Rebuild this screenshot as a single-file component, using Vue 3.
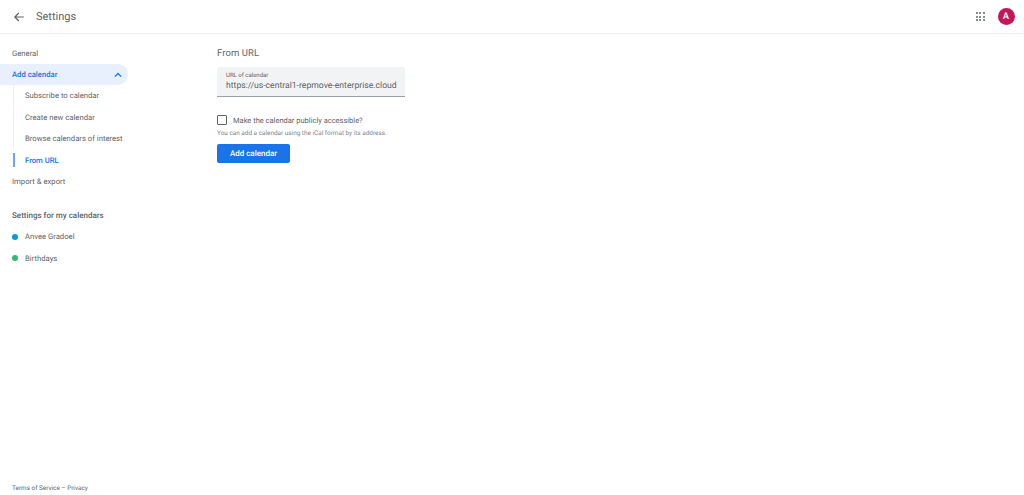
<script setup>
const subItems = [
  { label: 'Subscribe to calendar' },
  { label: 'Create new calendar' },
  { label: 'Browse calendars of interest' },
  { label: 'From URL', active: true },
]
const calendars = [
  { label: 'Anvee Gradoel', color: '#039be5' },
  { label: 'Birthdays', color: '#33b679' },
]
const dots = [0, 1, 2, 3, 4, 5, 6, 7, 8]
</script>

<template>
  <div class="page">
    <header class="topbar">
      <svg class="back" width="12" height="12" viewBox="0 0 12 12">
        <path d="M10.8 6H2M5.8 2L1.8 6l4 4" fill="none" stroke="#5f6368" stroke-width="1.2" />
      </svg>
      <span class="title">Settings</span>
      <div class="spacer"></div>
      <div class="apps">
        <i v-for="d in dots" :key="d"></i>
      </div>
      <div class="avatar">A</div>
    </header>
    <div class="body">
      <nav class="side">
        <div class="item">General</div>
        <div class="item open">
          <span>Add calendar</span>
          <svg width="8" height="6" viewBox="0 0 8 6">
            <path d="M0.8 4.6L4 1.5l3.2 3.1" fill="none" stroke="#1a73e8" stroke-width="1.3" />
          </svg>
        </div>
        <div class="subs">
          <div v-for="s in subItems" :key="s.label" class="sub" :class="{ active: s.active }">{{ s.label }}</div>
        </div>
        <div class="item">Import &amp; export</div>
        <div class="heading">Settings for my calendars</div>
        <div v-for="c in calendars" :key="c.label" class="cal">
          <i :style="{ background: c.color }"></i>
          <span>{{ c.label }}</span>
        </div>
        <div class="terms">Terms of Service – Privacy</div>
      </nav>
      <main class="main">
        <h2>From URL</h2>
        <div class="field">
          <label>URL of calendar</label>
          <div class="value">https://us-central1-repmove-enterprise.cloud</div>
        </div>
        <div class="check">
          <span class="box"></span>
          <span>Make the calendar publicly accessible?</span>
        </div>
        <p class="hint">You can add a calendar using the iCal format by its address.</p>
        <button class="add">Add calendar</button>
      </main>
    </div>
  </div>
</template>

<style>
html, body { margin: 0; background: #fff; }
</style>

<style scoped>
.page {
  width: 1024px;
  height: 495px;
  overflow: hidden;
  display: flex;
  flex-direction: column;
  font-family: Roboto, "Liberation Sans", sans-serif;
  color: #5f6368;
  text-rendering: geometricPrecision;
}
.topbar {
  height: 33px;
  flex: none;
  display: flex;
  align-items: center;
  padding: 0 9.5px 0 13px;
  border-bottom: 1px solid #eceef0;
}
.back { margin-right: 11px; }
.title { font-size: 11px; color: #5f6368; }
.spacer { flex: 1; }
.apps {
  display: grid;
  grid-template-columns: repeat(3, 2px);
  gap: 1.5px;
  margin-right: 13px;
}
.apps i { width: 2px; height: 2px; background: #5f6368; border-radius: 50%; }
.avatar {
  width: 17px;
  height: 17px;
  border-radius: 50%;
  background: #c2185b;
  color: #fff;
  font-size: 9.5px;
  font-weight: 500;
  display: flex;
  align-items: center;
  justify-content: center;
}
.body { flex: 1; display: flex; min-height: 0; }
.side {
  width: 217px;
  flex: none;
  display: flex;
  flex-direction: column;
  padding-top: 8.5px;
  font-size: 7.7px;
  position: relative;
}
.item {
  width: 128px;
  box-sizing: border-box;
  height: 21.4px;
  display: flex;
  align-items: center;
  justify-content: space-between;
  padding: 0 6px 0 12px;
}
.open {
  background: #e8f0fe;
  color: #1a73e8;
  font-weight: 500;
  border-radius: 0 11px 11px 0;
}
.subs { margin-left: 13px; }
.sub {
  height: 21.4px;
  display: flex;
  align-items: center;
  padding-left: 12px;
  position: relative;
}
.sub::before {
  content: "";
  position: absolute;
  left: 0;
  top: 0;
  bottom: 0;
  width: 1px;
  background: #eceef0;
}
.sub.active { color: #1a73e8; font-weight: 500; }
.sub.active::before {
  top: 4px;
  bottom: 4px;
  width: 2px;
  background: #6fa3f0;
}
.heading {
  margin-top: 12px;
  height: 22px;
  padding-left: 12px;
  display: flex;
  align-items: center;
  font-size: 8px;
  font-weight: 500;
}
.cal {
  height: 21.4px;
  display: flex;
  align-items: center;
  gap: 7px;
  padding-left: 12px;
}
.cal i { width: 6px; height: 6px; border-radius: 50%; }
.terms {
  position: absolute;
  left: 12px;
  top: 450px;
  font-size: 6.4px;
}
.main { padding-top: 13px; }
h2 {
  margin: 0;
  font-size: 9.5px;
  font-weight: 400;
  letter-spacing: 0.1px;
  line-height: 14px;
  color: #5f6368;
}
.field {
  margin-top: 6px;
  width: 188px;
  height: 30px;
  box-sizing: border-box;
  background: #f1f3f4;
  border-bottom: 1px solid #9aa0a6;
  border-radius: 2px 2px 0 0;
  padding: 5px 9px 0;
}
.field label { display: block; font-size: 6px; line-height: 7px; }
.value { font-size: 8.65px; line-height: 13px; margin-top: 1px; color: #5f6368; white-space: nowrap; }
.check {
  margin-top: 17px;
  display: flex;
  align-items: center;
  gap: 6px;
  font-size: 7.5px;
  height: 12px;
}
.box {
  width: 8px;
  height: 8px;
  border: 1.3px solid #5f6368;
  border-radius: 1px;
}
.hint { margin: 3px 0 0; font-size: 6.4px; line-height: 9px; color: #80868b; }
.add {
  display: block;
  margin-top: 6px;
  width: 73px;
  height: 19px;
  border: 0;
  border-radius: 2px;
  background: #1a73e8;
  color: #fff;
  font: 500 8px Roboto, "Liberation Sans", sans-serif;
  text-rendering: geometricPrecision;
  padding: 0;
}
</style>
